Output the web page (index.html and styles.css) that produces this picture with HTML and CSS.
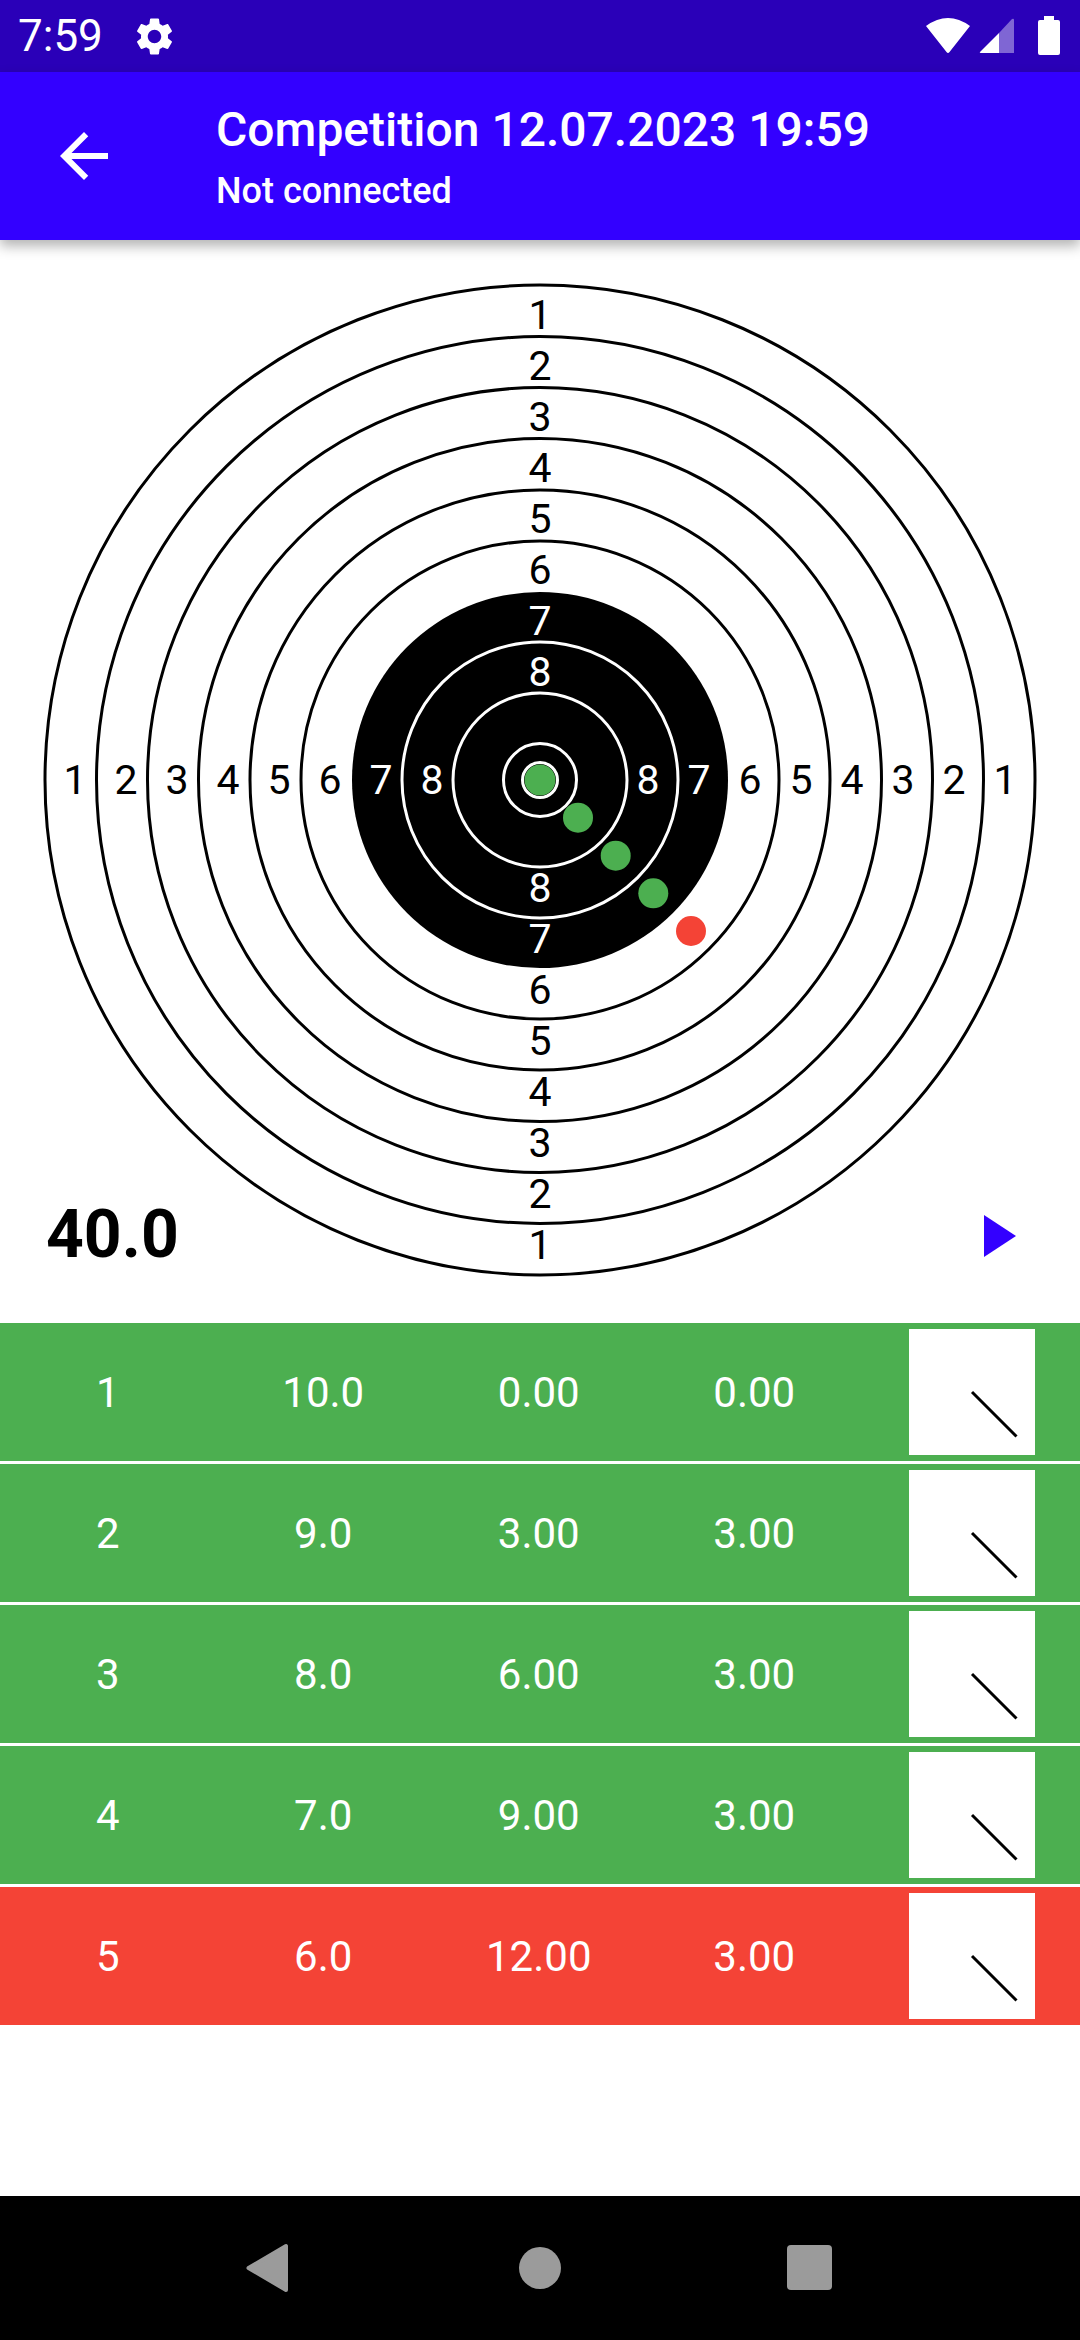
FILE: index.html
```html
<!DOCTYPE html>
<html lang="en">
<head>
    <meta charset="UTF-8">
    <meta name="viewport" content="width=device-width, initial-scale=1.0">
    <title>Competition 12.07.2023 19:59</title>
    <link rel="stylesheet" href="styles.css">
</head>
<body>
    <div class="screen">
        <div class="status-bar">
            <span class="clock">7:59</span>
            <svg class="gear" viewBox="0 0 24 24"><path d="M19.14 12.94c.04-.3.06-.61.06-.94 0-.32-.02-.64-.07-.94l2.03-1.58c.18-.14.23-.41.12-.61l-1.92-3.32c-.12-.22-.37-.29-.59-.22l-2.39.96c-.5-.38-1.03-.7-1.62-.94l-.36-2.54c-.04-.24-.24-.41-.48-.41h-3.84c-.24 0-.43.17-.47.41l-.36 2.54c-.59.24-1.13.57-1.62.94l-2.39-.96c-.22-.08-.47 0-.59.22L2.74 8.87c-.12.21-.08.47.12.61l2.03 1.58c-.05.3-.09.63-.09.94s.02.64.07.94l-2.03 1.58c-.18.14-.23.41-.12.61l1.92 3.32c.12.22.37.29.59.22l2.39-.96c.5.38 1.03.7 1.62.94l.36 2.54c.05.24.24.41.48.41h3.84c.24 0 .44-.17.47-.41l.36-2.54c.59-.24 1.13-.56 1.62-.94l2.39.96c.22.08.47 0 .59-.22l1.92-3.32c.12-.22.07-.47-.12-.61l-2.01-1.58zM12 15.6c-1.98 0-3.6-1.62-3.6-3.6s1.62-3.6 3.6-3.6 3.6 1.62 3.6 3.6-1.62 3.6-3.6 3.6z"/></svg>
            <svg class="sys-icons" viewBox="0 0 140 42">
                <path d="M1 10 Q23 -6 45 10 L24.5 36 Q23 38 21.5 36 Z" fill="#fff"/>
                <path d="M55 36 L74 17 V37 H56 Q54 37 55 36 Z" fill="#fff"/>
                <path d="M74 17 L87 3 Q89 2 89 4 V37 H74 Z" fill="#fff" opacity="0.4"/>
                <path d="M119 0 H129 V4 H133 Q135 4 135 6 V37 Q135 39 133 39 H115 Q113 39 113 37 V6 Q113 4 115 4 H119 Z" fill="#fff"/>
            </svg>
        </div>

        <div class="app-bar">
            <svg class="back" viewBox="0 0 24 24"><path d="M20 11H7.83l5.59-5.59L12 4l-8 8 8 8 1.41-1.41L7.83 13H20v-2z"/></svg>
            <div class="titles">
                <div class="title">Competition 12.07.2023 19:59</div>
                <div class="subtitle">Not connected</div>
            </div>
        </div>

        <div class="content">
            <div class="target-area">
                <svg class="target" viewBox="0 0 1080 1083">
                    <g class="rings">
                        <circle cx="540" cy="540" r="495"/>
                        <circle cx="540" cy="540" r="443.5"/>
                        <circle cx="540" cy="540" r="392.5"/>
                        <circle cx="540" cy="540" r="341.5"/>
                        <circle cx="540" cy="540" r="290"/>
                        <circle cx="540" cy="540" r="239"/>
                    </g>
                    <circle class="black" cx="540" cy="540" r="188"/>
                    <g class="rings-white">
                        <circle cx="540" cy="540" r="138"/>
                        <circle cx="540" cy="540" r="87"/>
                        <circle cx="540" cy="540" r="36.5"/>
                        <circle cx="540" cy="540" r="17.5"/>
                    </g>

                    <g class="labels">
                        <text x="540" y="89">1</text>
                        <text x="540" y="140">2</text>
                        <text x="540" y="191">3</text>
                        <text x="540" y="242">4</text>
                        <text x="540" y="293">5</text>
                        <text x="540" y="344">6</text>
                        <text x="540" y="764">6</text>
                        <text x="540" y="815">5</text>
                        <text x="540" y="866">4</text>
                        <text x="540" y="917">3</text>
                        <text x="540" y="968">2</text>
                        <text x="540" y="1019">1</text>
                        <text x="75" y="554">1</text>
                        <text x="126" y="554">2</text>
                        <text x="177" y="554">3</text>
                        <text x="228" y="554">4</text>
                        <text x="279" y="554">5</text>
                        <text x="330" y="554">6</text>
                        <text x="750" y="554">6</text>
                        <text x="801" y="554">5</text>
                        <text x="852" y="554">4</text>
                        <text x="903" y="554">3</text>
                        <text x="954" y="554">2</text>
                        <text x="1005" y="554">1</text>
                    </g>
                    <g class="labels labels-white">
                        <text x="540" y="395">7</text>
                        <text x="540" y="446">8</text>
                        <text x="540" y="662">8</text>
                        <text x="540" y="713">7</text>
                        <text x="381" y="554">7</text>
                        <text x="432" y="554">8</text>
                        <text x="648" y="554">8</text>
                        <text x="699" y="554">7</text>
                    </g>

                    <circle class="shot-ok" cx="540" cy="540" r="15.5"/>
                    <circle class="shot-ok" cx="578" cy="577.7" r="15"/>
                    <circle class="shot-ok" cx="615.7" cy="615.7" r="15"/>
                    <circle class="shot-ok" cx="653.3" cy="653.3" r="15"/>
                    <circle class="shot-bad" cx="691" cy="691" r="15"/>
                </svg>
                <div class="total">40.0</div>
                <svg class="play" viewBox="0 0 32 42"><path d="M0 0 L32 21 L0 42 Z"/></svg>
            </div>

            <div class="shots">
                <div class="shot-row ok">
                    <span>1</span><span>10.0</span><span>0.00</span><span>0.00</span>
                    <svg class="thumb" viewBox="0 0 126 126"><line x1="63" y1="63" x2="107.5" y2="107.5"/></svg>
                </div>
                <div class="shot-row ok">
                    <span>2</span><span>9.0</span><span>3.00</span><span>3.00</span>
                    <svg class="thumb" viewBox="0 0 126 126"><line x1="63" y1="63" x2="107.5" y2="107.5"/></svg>
                </div>
                <div class="shot-row ok">
                    <span>3</span><span>8.0</span><span>6.00</span><span>3.00</span>
                    <svg class="thumb" viewBox="0 0 126 126"><line x1="63" y1="63" x2="107.5" y2="107.5"/></svg>
                </div>
                <div class="shot-row ok">
                    <span>4</span><span>7.0</span><span>9.00</span><span>3.00</span>
                    <svg class="thumb" viewBox="0 0 126 126"><line x1="63" y1="63" x2="107.5" y2="107.5"/></svg>
                </div>
                <div class="shot-row bad">
                    <span>5</span><span>6.0</span><span>12.00</span><span>3.00</span>
                    <svg class="thumb" viewBox="0 0 126 126"><line x1="63" y1="63" x2="107.5" y2="107.5"/></svg>
                </div>
            </div>
        </div>

        <div class="nav-bar">
            <svg class="nav-icons" viewBox="0 0 1080 144">
                <polygon class="nav-back" points="248.5,72 286,50 286,94"/>
                <circle cx="540" cy="72" r="21"/>
                <rect x="787" y="49" width="45" height="45" rx="4"/>
            </svg>
        </div>
    </div>
</body>
</html>
```

FILE: styles.css
```css
body {
    margin: 0;
    padding: 0;
    background-color: #fff;
    font-family: Roboto, "Liberation Sans", sans-serif;
}
.screen {
    width: 1080px;
    height: 2340px;
    display: flex;
    flex-direction: column;
    overflow: hidden;
}
.status-bar {
    height: 72px;
    flex: none;
    display: flex;
    align-items: center;
    padding-left: 18px;
    background-color: #2a00b8;
    color: #fff;
}
.clock {
    font-size: 44px;
    font-weight: 400;
}
.gear {
    width: 45px;
    height: 45px;
    margin-left: 29px;
    fill: #fff;
}
.sys-icons {
    width: 140px;
    height: 42px;
    margin-left: auto;
    margin-right: 15px;
    margin-top: 2px;
}
.app-bar {
    height: 168px;
    flex: none;
    display: flex;
    align-items: center;
    padding-left: 48px;
    background-color: #3300ff;
    color: #fff;
    box-shadow: 0 6px 12px rgba(0,0,0,0.3);
    position: relative;
    z-index: 1;
}
.back {
    width: 72px;
    height: 72px;
    fill: #fff;
}
.titles {
    margin-left: 96px;
    margin-top: 4px;
}
.title {
    font-size: 48px;
    font-weight: 500;
    line-height: 58px;
}
.subtitle {
    font-size: 36px;
    font-weight: 500;
    line-height: 50px;
    margin-top: 7px;
}
.content {
    flex: 1;
    background-color: #fff;
}
.target-area {
    height: 1083px;
    position: relative;
}
.target {
    display: block;
    width: 1080px;
    height: 1083px;
}
.rings circle {
    fill: none;
    stroke: #000;
    stroke-width: 3;
}
.black {
    fill: #000;
}
.rings-white circle {
    fill: none;
    stroke: #fff;
    stroke-width: 3;
}
.labels text {
    font-family: Roboto, sans-serif;
    font-size: 41px;
    text-anchor: middle;
    fill: #000;
}
.labels-white text {
    fill: #fff;
}
.shot-ok {
    fill: #4caf50;
}
.shot-bad {
    fill: #f44336;
}
.total {
    position: absolute;
    left: 46px;
    top: 956px;
    font-size: 66px;
    font-weight: 700;
    line-height: 78px;
    color: #000;
}
.play {
    position: absolute;
    left: 984px;
    top: 975px;
    width: 32px;
    height: 42px;
    fill: #3300ff;
}
.shots {
    display: flex;
    flex-direction: column;
    gap: 3px;
}
.shot-row {
    height: 138px;
    display: grid;
    grid-template-columns: repeat(4, 215.5px) 1fr;
    align-items: center;
    color: #fff;
    font-size: 42px;
    text-align: center;
}
.ok {
    background-color: #4caf50;
}
.bad {
    background-color: #f44336;
}
.thumb {
    width: 126px;
    height: 126px;
    margin-left: 47px;
    background-color: #fff;
}
.thumb line {
    stroke: #000;
    stroke-width: 3;
}
.nav-bar {
    height: 144px;
    flex: none;
    background-color: #000;
}
.nav-icons {
    display: block;
    width: 1080px;
    height: 144px;
    fill: #9b9b9b;
}
.nav-back {
    stroke: #9b9b9b;
    stroke-width: 4;
    stroke-linejoin: round;
}
```
